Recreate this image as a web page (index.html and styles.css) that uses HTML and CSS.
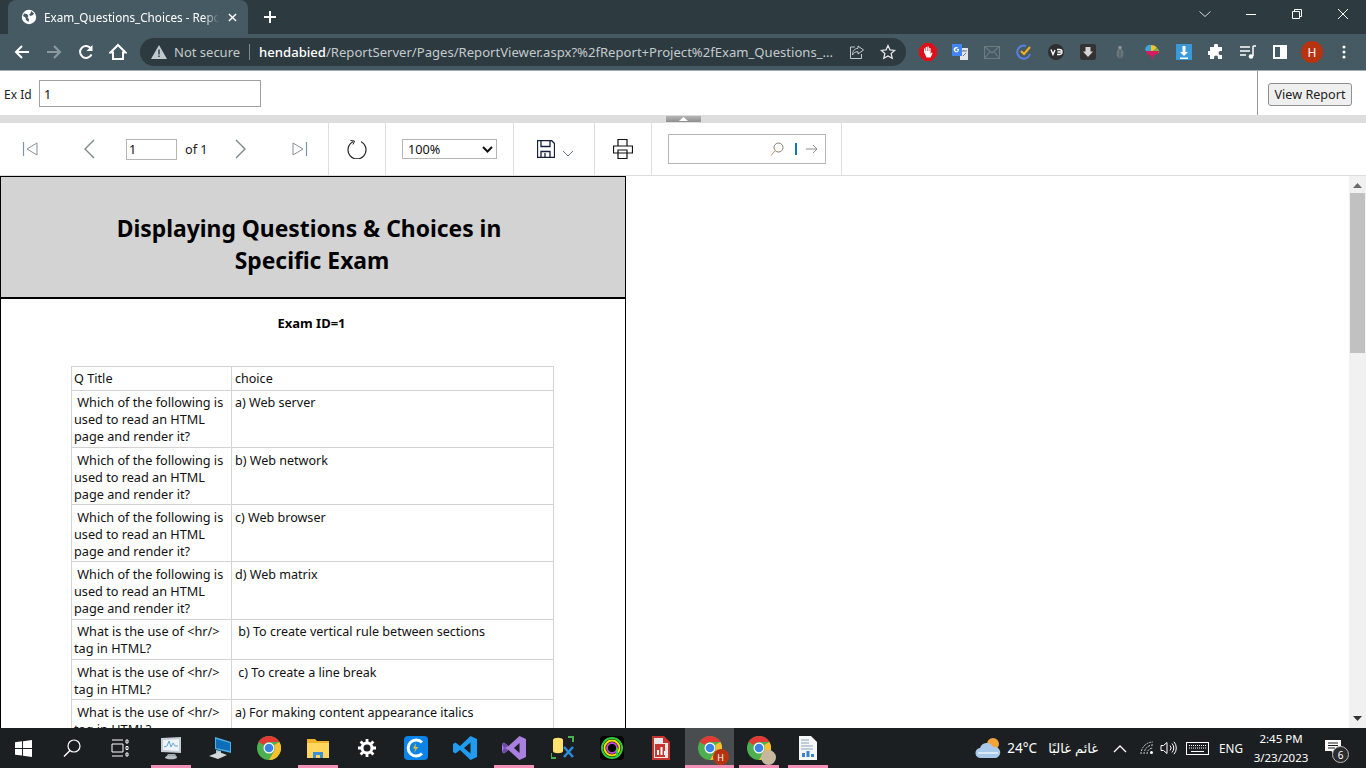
FILE: index.html
```html
<!DOCTYPE html>
<html lang="en">
<head>
<meta charset="utf-8">
<title>Exam_Questions_Choices - Report Viewer</title>
<link rel="stylesheet" href="styles.css">
</head>
<body>
<div class="screen">
  <header class="tabstrip">
    <div class="tab">
      <svg class="tab-favicon" viewBox="0 0 16 16"><circle cx="8" cy="8" r="7.2" fill="#fff"/><path d="M3 4.500l3 .5 1.500 2-1 1.500 1.500 1.500-.5 3L5 11 4.500 8.500 2 7zM10 2l3 2.500-1 1.500-2.500 1L8 5.500 9.500 4.500z" fill="#455a64"/></svg>
      <span class="tab-title">Exam_Questions_Choices - Repor</span>
      <svg class="tab-close" viewBox="0 0 10 10"><path d="M1 1l8 8M9 1l-8 8" stroke="#fff" stroke-width="1.600"/></svg>
    </div>
    <svg class="newtab" viewBox="0 0 12 12"><path d="M6 0v12M0 6h12" stroke="#fff" stroke-width="2"/></svg>
    <div class="winctl">
      <span class="winbtn"><svg width="14" height="14" viewBox="0 0 14 14"><path d="M1.500 4.500L7 9.500l5.500-5" fill="none" stroke="#cfd4d6"/></svg></span>
      <span class="winbtn"><svg width="12" height="12" viewBox="0 0 12 12"><path d="M1 6.500h10" stroke="#fff"/></svg></span>
      <span class="winbtn"><svg width="12" height="12" viewBox="0 0 12 12"><path d="M1.500 3.500h7v7h-7zM3.500 3.500v-2h7v7h-2" fill="none" stroke="#fff"/></svg></span>
      <span class="winbtn"><svg width="12" height="12" viewBox="0 0 12 12"><path d="M1 1l10 10M11 1L1 11" stroke="#fff"/></svg></span>
    </div>
  </header>

  <nav class="urlbar">
    <span class="navbtn"><svg width="16" height="16" viewBox="0 0 16 16"><path d="M15 8H2M8 2L2 8l6 6" fill="none" stroke="#fff" stroke-width="2"/></svg></span>
    <span class="navbtn"><svg width="16" height="16" viewBox="0 0 16 16"><path d="M1 8h13M8 2l6 6-6 6" fill="none" stroke="#8d9ba1" stroke-width="2"/></svg></span>
    <span class="navbtn"><svg width="16" height="16" viewBox="0 0 16 16"><path d="M13.500 10.500A6 6 0 1 1 13 4.500" fill="none" stroke="#fff" stroke-width="2"/><path d="M14.500 1v6h-6z" fill="#fff"/></svg></span>
    <span class="navbtn"><svg width="18" height="18" viewBox="0 0 18 18"><path d="M9 2L1.500 9.500H4v6.500h10V9.500h2.500z" fill="none" stroke="#fff" stroke-width="2"/></svg></span>
    <div class="omnibox">
      <svg class="warn" width="16" height="14" viewBox="0 0 16 14"><path d="M8 0l8 14H0z" fill="#c3cacd"/><path d="M7.200 4.500h1.600v5H7.200zM7.200 10.500h1.600v1.600H7.200z" fill="#3a4a51"/></svg>
      <span class="notsecure">Not secure</span>
      <span class="omni-sep"></span>
      <span class="url"><b>hendabied</b>/ReportServer/Pages/ReportViewer.aspx?%2fReport+Project%2fExam_Questions_...</span>
      <svg class="omni-share" width="16" height="16" viewBox="0 0 16 16"><path d="M6 3H1.500v11.500h11V10M9 2l5.500 4L9 10V7.700C6 7.700 4.500 9 3.500 11c0-4 2-6.500 5.500-6.700z" fill="none" stroke="#c3cacd" stroke-width="1"/></svg>
      <svg class="omni-star" width="16" height="16" viewBox="0 0 16 16"><path d="M8 1.500l2 4.400 4.700.5-3.500 3.200 1 4.700L8 11.900l-4.200 2.400 1-4.700-3.500-3.200 4.700-.5z" fill="none" stroke="#e6e9ea" stroke-width="1.300"/></svg>
    </div>
    <div class="extensions">
      <span class="ext"><svg width="18" height="18" viewBox="0 0 18 18"><path d="M5.500 0h7L18 5.500v7L12.500 18h-7L0 12.500v-7z" fill="#e0101a"/><path d="M5 9V5.500h1.200V8h.5V4h1.300v4h.5V3.500h1.300V8h.5V5h1.300v6l1-1.500 1 .5-2 4.500H7.500z" fill="#fff"/></svg></span>
      <span class="ext"><svg width="16" height="16" viewBox="0 0 16 16"><path d="M8 4h8v12H8z" fill="#e3e6e8"/><path d="M0 0h10v12H0z" fill="#4285f4"/><path d="M7 5H5v1.200h1c-.2.700-.6 1-1.300 1a1.500 1.500 0 0 1 0-3l.7.200.7-.8A2.700 2.700 0 1 0 7 6z" fill="#fff"/><path d="M10 7h5M12 6v1M11 12l3-3" stroke="#6b7478"/></svg></span>
      <span class="ext"><svg width="16" height="13" viewBox="0 0 16 13"><path d="M.5.500h15v12H.500zM.5.500L8 7l7.500-6.500M.5 12.500L6 5.500M15.500 12.500L10 5.500" fill="none" stroke="#6b7b82" stroke-width="1.200"/></svg></span>
      <span class="ext"><svg width="16" height="16" viewBox="0 0 16 16"><path d="M14 10a6.500 6.500 0 1 1-4-8" fill="none" stroke="#5b7fe0" stroke-width="2"/><path d="M5 7l3 3 6-7" fill="none" stroke="#f5b21a" stroke-width="2"/></svg></span>
      <span class="ext"><svg width="16" height="16" viewBox="0 0 16 16"><circle cx="8" cy="8" r="8" fill="#2f2f2f"/><path d="M3 5.500l2 5 2-4.500M9 5.500h2.500a2.500 2.500 0 0 1 0 5H9M9.500 8H13" fill="none" stroke="#fff" stroke-width="1.400"/></svg></span>
      <span class="ext"><svg width="16" height="16" viewBox="0 0 16 16"><rect width="16" height="16" rx="2" fill="#333"/><path d="M5.500 3h5v4.500H13L8 13 3 7.500h2.500z" fill="#d6d6d6"/></svg></span>
      <span class="ext"><svg width="14" height="16" viewBox="0 0 14 16"><ellipse cx="7" cy="9.500" rx="3.500" ry="5" fill="#69757b"/><circle cx="7" cy="3.500" r="1.800" fill="#8a9499"/><path d="M7 6v8" stroke="#4d5a60"/></svg></span>
      <span class="ext"><svg width="16" height="16" viewBox="0 0 16 16"><path d="M1 5a5 5 0 0 1 6-4v6H2z" fill="#3fa7d6"/><path d="M7 1c3 0 5 1 6 3L9 7H7z" fill="#f2c230"/><path d="M13 4c2 1 2.500 3 2 5l-5 0-1-2z" fill="#7cb342"/><path d="M2 7h13l-1 3-4 1-1 2-1 3-1-4-4-2z" fill="#d81b60"/></svg></span>
      <span class="ext"><svg width="16" height="16" viewBox="0 0 16 16"><rect width="16" height="16" fill="#3a9ad9"/><path d="M6.500 2h3v6H12l-4 4-4-4h2.500zM4 13.500h8V15H4z" fill="#fff"/></svg></span>
      <span class="ext"><svg width="16" height="16" viewBox="0 0 16 16"><path d="M6 1.500a2 2 0 0 1 4 0V3h4v4h-1.500a2 2 0 0 0 0 4H14v4h-4v-1.500a2 2 0 0 0-4 0V15H2v-4H.5a2 2 0 0 1 0-4H2V3h4z" fill="#fff"/></svg></span>
      <span class="ext"><svg width="16" height="16" viewBox="0 0 16 16"><path d="M0 3h10M0 7h10M0 11h6" stroke="#fff" stroke-width="1.500"/><path d="M13 2v10" stroke="#fff" stroke-width="1.500"/><path d="M13 2h3" stroke="#fff" stroke-width="1.500"/><circle cx="11" cy="12.500" r="2.300" fill="#fff"/></svg></span>
      <span class="ext"><svg width="14" height="14" viewBox="0 0 14 14"><path d="M0 0h14v14H0z" fill="#fff"/><path d="M2 2h5v10H2z" fill="#455a64"/></svg></span>
      <span class="ext"><span class="avatar">H</span></span>
      <span class="ext"><svg width="4" height="14" viewBox="0 0 4 14"><circle cx="2" cy="2" r="1.500" fill="#fff"/><circle cx="2" cy="7" r="1.500" fill="#fff"/><circle cx="2" cy="12" r="1.500" fill="#fff"/></svg></span>
    </div>
  </nav>

  <section class="params">
    <label class="param-label">Ex Id</label>
    <div class="param-input">1</div>
    <div class="param-action"><button class="view-btn">View Report</button></div>
  </section>

  <div class="splitter">
    <span class="collapser"><svg width="9" height="4" viewBox="0 0 9 4"><path d="M4.500 0L9 4H0z" fill="#fff"/></svg></span>
  </div>

  <section class="toolbar">
    <div class="tg tg-pager">
      <svg class="tb-first" width="16" height="16" viewBox="0 0 16 16"><path d="M1.500 1v14" stroke="#7d94a8" stroke-width="1.200"/><path d="M15 2v12L5 8z" fill="none" stroke="#8a8f94"/></svg>
      <svg class="tb-prev" width="12" height="20" viewBox="0 0 12 20"><path d="M11 1L2 10l9 9" fill="none" stroke="#80868c" stroke-width="1.400"/></svg>
      <span class="page-input">1</span>
      <span class="page-of">of 1</span>
      <svg class="tb-next" width="12" height="20" viewBox="0 0 12 20"><path d="M1 1l9 9-9 9" fill="none" stroke="#80868c" stroke-width="1.400"/></svg>
      <svg class="tb-last" width="16" height="16" viewBox="0 0 16 16"><path d="M14.500 1v14" stroke="#7d94a8" stroke-width="1.200"/><path d="M1 2v12l10-6z" fill="none" stroke="#8a8f94"/></svg>
    </div>
    <div class="tg tg-refresh">
      <svg width="20" height="20" viewBox="0 0 20 20"><path d="M6 2.800a9 9 0 1 0 8 0" fill="none" stroke="#222" stroke-width="1.200"/><path d="M3.500 1.500l4 .5-1.500 3.500" fill="none" stroke="#222" stroke-width="1"/></svg>
    </div>
    <div class="tg tg-zoom">
      <span class="zoom-select">100%<svg width="11" height="7" viewBox="0 0 11 7"><path d="M1 1l4.500 4.500L10 1" fill="none" stroke="#111" stroke-width="2"/></svg></span>
    </div>
    <div class="tg tg-save">
      <svg width="18" height="18" viewBox="0 0 18 18"><path d="M.5.500h14l3 3v14H.5zM4 .5v6h9v-6M4 17.500v-6h9v6M8 13v4.500" fill="none" stroke="#15203a" stroke-width="1.300"/></svg>
      <svg class="save-caret" width="12" height="7" viewBox="0 0 12 7"><path d="M1 1l5 5 5-5" fill="none" stroke="#6d7780" stroke-width="1"/></svg>
    </div>
    <div class="tg tg-print">
      <svg width="20" height="20" viewBox="0 0 20 20"><path d="M5 7V.5h9V7M.5 7h19v7H.5zM5 11h9v8.500H5z" fill="#fff" stroke="#111" stroke-width="1.200"/></svg>
    </div>
    <div class="tg tg-find">
      <div class="find-box">
        <svg width="14" height="14" viewBox="0 0 14 14"><circle cx="8.500" cy="5.500" r="4.500" fill="none" stroke="#8f7b68"/><path d="M5 9l-4 4.500" stroke="#b88f6c"/></svg>
        <span class="find-sep"></span>
        <svg width="12" height="10" viewBox="0 0 12 10"><path d="M0 5h11M7 1l4 4-4 4" fill="none" stroke="#8d8d8d"/></svg>
      </div>
    </div>
  </section>

  <main class="report-area">
    <div class="report-scroll">
      <article class="report-page">
        <div class="report-head"><h1>Displaying Questions &amp; Choices in&nbsp;<br>Specific Exam</h1></div>
        <div class="report-sub">Exam ID=1</div>
        <table class="report-table">
          <tr class="r-head"><td>Q Title</td><td>choice</td></tr>
          <tr class="r-3"><td>&nbsp;Which of the following is used to read an HTML page and render it?</td><td>a) Web server</td></tr>
          <tr class="r-3"><td>&nbsp;Which of the following is used to read an HTML page and render it?</td><td>b) Web network</td></tr>
          <tr class="r-3"><td>&nbsp;Which of the following is used to read an HTML page and render it?</td><td>c) Web browser</td></tr>
          <tr class="r-3b"><td>&nbsp;Which of the following is used to read an HTML page and render it?</td><td>d) Web matrix</td></tr>
          <tr class="r-2"><td>&nbsp;What is the use of &lt;hr/&gt; tag in HTML?</td><td>&nbsp;b) To create vertical rule between sections</td></tr>
          <tr class="r-2"><td>&nbsp;What is the use of &lt;hr/&gt; tag in HTML?</td><td>&nbsp;c) To create a line break</td></tr>
          <tr class="r-2"><td>&nbsp;What is the use of &lt;hr/&gt; tag in HTML?</td><td>a) For making content appearance italics</td></tr>
        </table>
      </article>
    </div>
    <div class="scrollbar">
      <svg width="9" height="6" viewBox="0 0 9 6"><path d="M4.500 0L9 5H0z" fill="#6a6a6a"/></svg>
      <span class="thumb"></span>
      <span class="track"></span>
      <svg width="9" height="6" viewBox="0 0 9 6"><path d="M4.500 6L9 1H0z" fill="#333"/></svg>
    </div>
  </main>

  <footer class="taskbar">
    <span class="tk tk-a tk-win"><svg width="17" height="17" viewBox="0 0 18 18"><path d="M0 2.500L7.500 1.400V8.500H0zM8.500 1.300L18 0v8.500H8.500zM0 9.500h7.500v7L0 15.500zM8.500 9.500H18V18l-9.500-1.300z" fill="#fff"/></svg></span>
    <span class="tk tk-a"><svg width="18" height="18" viewBox="0 0 18 18"><circle cx="11" cy="7" r="6" fill="none" stroke="#fff" stroke-width="1.200"/><path d="M7 11.500L1 17.500" stroke="#fff" stroke-width="1.400"/></svg></span>
    <span class="tk tk-a tk-last-sys"><svg width="18" height="18" viewBox="0 0 18 18"><path d="M1 1h11M1 17h11M1 5h11v8H1zM15 1h2v3h-2zM15 7.500h2v3h-2zM15 14h2v3h-2z" fill="none" stroke="#fff" stroke-width="1"/></svg></span>
    <span class="tk pin"><svg width="24" height="24" viewBox="0 0 24 24"><path d="M2 2l20-1v16L2 16z" fill="#c3cdd4"/><path d="M4 4l16-1v12L4 14z" fill="#eef3f6"/><path d="M5 11l3-1 2-5 2 6 2-4 2 3h3" fill="none" stroke="#5da7d6"/><path d="M9 18h7l2 3H7z" fill="#9aa3a8"/><ellipse cx="12" cy="21.500" rx="6" ry="1.800" fill="#b6bec3"/></svg></span>
    <span class="tk"><svg width="24" height="24" viewBox="0 0 24 24"><path d="M7 1l16 5v11L7 13z" fill="#4fb0e8"/><path d="M8 3l14 4v8L8 12z" fill="#0f6cb8"/><path d="M8 14l5 1 0 3-5-1z" fill="#9ecde8"/><path d="M1 20l10-4 8 3-9 4z" fill="#d4d8da"/></svg></span>
    <span class="tk"><svg width="24" height="24" viewBox="0 0 24 24"><circle cx="12" cy="12" r="12" fill="#4caf50"/><path d="M12 0a12 12 0 0 1 10.400 6H12a6 6 0 0 0-5.200 3L1.600 6A12 12 0 0 1 12 0z" fill="#e53935"/><path d="M22.400 6A12 12 0 0 1 12 24l5.200-9a6 6 0 0 0 0-6z" fill="#fbc02d"/><circle cx="12" cy="12" r="5.500" fill="#fff"/><circle cx="12" cy="12" r="4.300" fill="#3b82e8"/></svg></span>
    <span class="tk pin"><svg width="22" height="20" viewBox="0 0 22 20"><path d="M0 1h8l2 2h12v17H0z" fill="#f0b429"/><path d="M0 5h22v15H0z" fill="#ffd75e"/><path d="M6 20v-6h10v6h-3v-3H9v3z" fill="#3d8fd1"/></svg></span>
    <span class="tk"><svg width="18" height="18" viewBox="0 0 18 18"><circle cx="9" cy="9" r="5" fill="none" stroke="#fff" stroke-width="3"/><path d="M9 0v3.500M9 14.500V18M0 9h3.500M14.500 9H18M2.600 2.600l2.500 2.500M12.900 12.900l2.500 2.500M2.600 15.400l2.500-2.500M12.900 5.100l2.500-2.500" stroke="#fff" stroke-width="2.800"/></svg></span>
    <span class="tk"><svg width="24" height="24" viewBox="0 0 24 24"><rect width="24" height="24" rx="4" fill="#0a84e8"/><path d="M18 6.500A8 8 0 1 0 18 17.500" fill="none" stroke="#fff" stroke-width="3"/><path d="M12 7l-3 5.500h2.500L10 17l4-6h-2.500z" fill="#f5c518"/></svg></span>
    <span class="tk"><svg width="24" height="24" viewBox="0 0 24 24"><path d="M17.500 0L24 3v18l-6.500 3L7 14l-4.500 3.500L0 16V8l2.500-1.500L7 10z" fill="#1f9cf0"/><path d="M17.500 6.500L11 12l6.500 5.500z" fill="#1c1f22"/></svg></span>
    <span class="tk pin"><svg width="24" height="24" viewBox="0 0 24 24"><path d="M17.500 0L24 3v18l-6.500 3L6.500 14 2 17.500 0 16V8l2-1.500L6.500 10z" fill="#a97fe0"/><path d="M17.500 7L12 12l5.500 5z" fill="#1c1f22"/><path d="M0 8l2-1.500L6.500 10 2 12.500zM0 16l2 1.500L6.500 14 2 11.500z" fill="#6d4aa8"/></svg></span>
    <span class="tk"><svg width="24" height="24" viewBox="0 0 24 24"><path d="M2 4c0-3 10-3 10 0v11c0 3-10 3-10 0z" fill="#ffe16b"/><path d="M0 22v-5M0 22h5M17 1h5v5" fill="none" stroke="#4caf50" stroke-width="2"/><path d="M13 11l9 10M22 11l-9 10" stroke="#2b8fdc" stroke-width="2.500"/></svg></span>
    <span class="tk"><svg width="24" height="24" viewBox="0 0 24 24"><rect width="24" height="24" rx="4" fill="#000"/><circle cx="12" cy="12" r="10" fill="none" stroke="#2ecc40" stroke-width="2"/><circle cx="12" cy="12" r="7.500" fill="none" stroke="#f5e000" stroke-width="2"/><circle cx="12" cy="12" r="5" fill="none" stroke="#c04bd8" stroke-width="2"/><path d="M17 12v8" stroke="#2ecc40" stroke-width="2"/></svg></span>
    <span class="tk"><svg width="18" height="24" viewBox="0 0 18 24"><path d="M0 0h12l6 6v18H0z" fill="#c9342e"/><path d="M2 2h9v5h5v15H2z" fill="#e8e8e8"/><path d="M3 8h10v13H3z" fill="#c9342e"/><path d="M5 14h2v5H5zM8.500 11h2v8h-2zM12 15h1v4h-1z" fill="#fff"/></svg></span>
    <span class="tk tk-active"><span class="chrome-badged"><svg width="24" height="24" viewBox="0 0 24 24"><circle cx="12" cy="12" r="12" fill="#4caf50"/><path d="M12 0a12 12 0 0 1 10.400 6H12a6 6 0 0 0-5.200 3L1.600 6A12 12 0 0 1 12 0z" fill="#e53935"/><path d="M22.400 6A12 12 0 0 1 12 24l5.200-9a6 6 0 0 0 0-6z" fill="#fbc02d"/><circle cx="12" cy="12" r="5.500" fill="#fff"/><circle cx="12" cy="12" r="4.300" fill="#3b82e8"/></svg><span class="tk-badge">H</span></span></span>
    <span class="tk pin"><span class="chrome-badged"><svg width="24" height="24" viewBox="0 0 24 24"><circle cx="12" cy="12" r="12" fill="#4caf50"/><path d="M12 0a12 12 0 0 1 10.400 6H12a6 6 0 0 0-5.200 3L1.600 6A12 12 0 0 1 12 0z" fill="#e53935"/><path d="M22.400 6A12 12 0 0 1 12 24l5.200-9a6 6 0 0 0 0-6z" fill="#fbc02d"/><circle cx="12" cy="12" r="5.500" fill="#fff"/><circle cx="12" cy="12" r="4.300" fill="#3b82e8"/></svg><span class="tk-photo"></span></span></span>
    <span class="tk pin"><svg width="18" height="24" viewBox="0 0 18 24"><path d="M0 0h12l6 6v18H0z" fill="#f4f6f8"/><path d="M2 4h8M2 7h8M2 10h12M2 13h12" stroke="#8aa3b8"/><path d="M3 21v-4h3v4zM7.500 21v-6h3v6zM12 21v-3h3v3z" fill="#3b82c8"/></svg></span>

    <div class="tray">
      <svg class="tray-weather" width="26" height="22" viewBox="0 0 26 22"><circle cx="18" cy="7" r="6" fill="#f2a33a"/><path d="M6 21a5 5 0 0 1-1-10 7 7 0 0 1 13-1 5.500 5.500 0 0 1 3 11z" fill="#a9c9ea"/><path d="M3 16h20" stroke="#dbe9f6" stroke-width="2"/></svg>
      <span class="tray-temp">24°C</span>
      <span class="tray-cond" dir="rtl" lang="ar">غائم غالبًا</span>
      <svg class="tray-up" width="14" height="9" viewBox="0 0 14 9"><path d="M1 8l6-6 6 6" fill="none" stroke="#fff" stroke-width="1.300"/></svg>
      <svg class="tray-wifi" width="14" height="14" viewBox="0 0 14 14"><path d="M1 13A12 12 0 0 1 13 1M4 13a9 9 0 0 1 9-9M7 13a6 6 0 0 1 6-6" fill="none" stroke="#cfd2d4" stroke-dasharray="2 1"/><circle cx="11.500" cy="11.500" r="1.500" fill="#fff"/></svg>
      <svg class="tray-vol" width="17" height="14" viewBox="0 0 17 14"><path d="M1 4.500h2.500L7 1.500v11L3.500 9.500H1zM10 4.500a3.500 3.500 0 0 1 0 5M12 2.500a6.500 6.500 0 0 1 0 9M14 .8a9.500 9.500 0 0 1 0 12.400" fill="none" stroke="#fff"/></svg>
      <svg class="tray-kbd" width="23" height="13" viewBox="0 0 23 13"><rect x=".5" y=".5" width="22" height="12" fill="none" stroke="#fff"/><path d="M3 3.500h17M3 6h17" stroke="#fff" stroke-dasharray="1 1"/><path d="M5 9.500h13" stroke="#fff"/></svg>
      <span class="tray-lang">ENG</span>
      <span class="tray-clock"><span>2:45 PM</span><span>3/23/2023</span></span>
      <span class="tray-notify"><svg width="16" height="14" viewBox="0 0 16 14"><path d="M0 0h16v11H9.500L8 13.500 6.500 11H0z" fill="#fff"/><path d="M3 3h10M3 5.500h10M3 8h7" stroke="#1c1f22"/></svg><span class="notify-count">6</span></span>
    </div>
  </footer>
</div>
</body>
</html>
```

FILE: styles.css
```css
* { box-sizing: border-box; }
html, body { margin: 0; padding: 0; overflow: hidden; }
body { font-family: "Noto Sans", "Open Sans", "DejaVu Sans", sans-serif; }
.screen { width: 1366px; height: 768px; display: flex; flex-direction: column; overflow: hidden; background: #fff; }

.tabstrip { height: 34px; flex: none; background: #2d3a40; display: flex; align-items: stretch; padding-left: 8px; }
.tab { width: 240px; background: #465a64; border-radius: 8px 8px 0 0; display: flex; align-items: center; padding-left: 13px; color: #fff; }
.tab-favicon { width: 16px; height: 16px; flex: none; }
.tab-title { margin-left: 7px; width: 175px; font-size: 11.7px; white-space: nowrap; flex: none; -webkit-mask-image: linear-gradient(to right, #000 160px, transparent 175px); mask-image: linear-gradient(to right, #000 160px, transparent 175px); }
.tab-close { width: 9px; height: 9px; flex: none; margin-left: 9px; }
.newtab { width: 12px; height: 12px; align-self: center; margin-left: 16px; }
.winctl { margin-left: auto; display: flex; align-items: center; padding-bottom: 6px; }
.winbtn { width: 46px; display: flex; justify-content: center; }

.urlbar { height: 37px; flex: none; background: #465a64; border-bottom: 1px solid #a3acb0; display: flex; align-items: center; padding-left: 6px; }
.navbtn { width: 32px; display: flex; justify-content: center; flex: none; }
.omnibox { width: 766px; height: 28px; margin-left: 6px; background: #2d3a40; border-radius: 14px; display: flex; align-items: center; padding-left: 11px; color: #c3cacd; flex: none; }
.warn { flex: none; }
.notsecure { margin-left: 7px; font-size: 13px; white-space: nowrap; }
.omni-sep { width: 1px; height: 16px; background: #7d8a90; margin: 0 9px; flex: none; }
.url { font-size: 13.1px; white-space: nowrap; width: 581px; flex: none; }
.url b { color: #fff; font-weight: 500; }
.omni-share { flex: none; margin-left: 9px; }
.omni-star { flex: none; margin-left: 15px; }
.extensions { display: flex; margin-left: 6px; align-items: center; }
.ext { width: 32px; display: flex; justify-content: center; align-items: center; flex: none; }
.avatar { width: 22px; height: 22px; border-radius: 50%; background: #b8330f; color: #fff; font-size: 12px; display: flex; align-items: center; justify-content: center; }

.params { height: 44px; flex: none; display: flex; align-items: center; background: #fff; padding-left: 4px; }
.param-label { font-size: 12px; color: #222; width: 35px; margin-top: 2px; }
.param-input { width: 222px; height: 27px; border: 1px solid #a0a0a0; font-size: 12.7px; padding: 4px; color: #111; }
.param-action { margin-left: auto; width: 109px; height: 100%; border-left: 1px solid #9a9a9a; display: flex; align-items: center; padding-left: 10px; }
.view-btn { width: 84px; height: 23px; padding: 0; background: #efefef; border: 1px solid #8f8f8f; border-radius: 3px; font: 12.6px "Noto Sans", sans-serif; color: #222; margin-top: 2px; }

.splitter { height: 8px; flex: none; background: #dedede; display: flex; justify-content: center; padding-left: 1px; }
.collapser { width: 35px; height: 6px; margin-top: 1px; background: linear-gradient(#b5b5b5, #8f8f8f); display: flex; align-items: center; justify-content: center; }

.toolbar { height: 53px; flex: none; display: flex; border-bottom: 1px solid #dedede; background: #fff; }
.tg { height: 52px; border-right: 1px solid #dedede; display: flex; align-items: center; flex: none; }
.tg-pager { width: 329px; padding-left: 22px; }
.tb-prev { margin-left: 45px; }
.page-input { width: 51px; height: 21px; margin-left: 31px; border: 1px solid #b5b5b5; font-size: 12.7px; padding-left: 2px; line-height: 19px; color: #111; }
.page-of { margin-left: 8px; width: 33px; font-size: 12.7px; color: #222; }
.tb-next { margin-left: 17px; }
.tb-last { margin-left: 45px; }
.tg-refresh { width: 57px; justify-content: center; }
.tg-zoom { width: 128px; padding-left: 16px; }
.zoom-select { width: 95px; height: 20px; border: 1px solid #b5b5b5; font-size: 12.7px; display: flex; align-items: center; justify-content: space-between; padding: 0 3px 0 5px; color: #111; }
.tg-save { width: 81px; padding-left: 23px; }
.save-caret { margin-left: 7px; margin-top: 8px; }
.tg-print { width: 57px; justify-content: center; }
.tg-find { width: 190px; padding-left: 16px; }
.find-box { width: 158px; height: 30px; border: 1px solid #b5b5b5; display: flex; align-items: center; padding-left: 101px; }
.find-sep { width: 2px; height: 12px; margin-left: 11px; margin-right: 9px; background: #1173b8; }

.report-area { flex: 1; min-height: 0; display: flex; background: #fff; }
.report-scroll { flex: 1; overflow: hidden; }
.report-page { width: 626px; border: 1px solid #000; border-bottom: 0; height: 700px; }
.report-head { height: 122px; background: #d3d3d3; border-bottom: 2px solid #000; padding-top: 36px; padding-right: 2px; }
.report-head h1 { margin: 0; font-size: 22.85px; line-height: 32px; font-weight: 700; text-align: center; color: #000; }
.report-sub { font-size: 13px; font-weight: 700; text-align: center; color: #000; margin-top: 16px; line-height: 17px; padding-right: 3px; }
.report-table { border-collapse: collapse; margin: 34px 0 0 70px; width: 483px; table-layout: fixed; }
.report-table td { border: 1px solid #d3d3d3; font-size: 12.7px; line-height: 17px; padding: 3px 2px 2px; vertical-align: top; color: #111; }
.report-table td:first-child { width: 160px; }
.report-table td + td { font-size: 12.55px; padding-left: 3px; }
.r-3 + .r-3 td, .r-3 + .r-3b td, .r-2 + .r-2 td { padding-top: 4px; padding-bottom: 1px; }
.r-head td { height: 24px; }
.r-3 td { height: 57px; }
.r-3b td { height: 58px; }
.r-2 td { height: 40px; }

.scrollbar { width: 17px; flex: none; background: #f1f1f1; display: flex; flex-direction: column; align-items: center; padding: 7px 0; }
.thumb { width: 15px; height: 160px; background: #c1c1c1; margin-top: 4px; flex: none; }
.track { flex: 1; }

.taskbar { height: 40px; flex: none; background: #1c1f22; display: flex; align-items: stretch; }
.tk { width: 49px; flex: none; display: flex; align-items: center; justify-content: center; position: relative; }
.tk-a { width: 48px; }
.tk-win { padding-right: 2px; }
.tk-last-sys { margin-right: 2px; }
.tk.pin::after, .tk-active::after { content: ""; position: absolute; left: 5px; right: 4px; bottom: 0; height: 3px; background: #f48fb8; }
.tk-active { background: #4a4d4f; }
.tk-active::after { left: 0; right: 0; }
.chrome-badged { position: relative; display: flex; }
.tk-badge { position: absolute; right: -7px; bottom: -5px; width: 16px; height: 16px; border-radius: 50%; background: #b8330f; color: #fff; font-size: 9px; display: flex; align-items: center; justify-content: center; }
.tk-photo { position: absolute; right: -5px; bottom: -5px; width: 15px; height: 15px; border-radius: 50%; background: #c7b79c; }

.tray { margin-left: auto; display: flex; align-items: center; color: #fff; font-size: 13px; padding-right: 25px; }
.tray-temp { margin-left: 6px; font-size: 13.5px; }
.tray-cond { margin-left: 10px; width: 51px; font-size: 13px; white-space: nowrap; font-family: "DejaVu Sans", sans-serif; }
.tray-up { margin-left: 15px; }
.tray-wifi { margin-left: 13px; }
.tray-vol { margin-left: 6px; }
.tray-kbd { margin-left: 9px; }
.tray-lang { margin-left: 10px; font-size: 11.7px; }
.tray-clock { margin-left: 9px; width: 58px; display: flex; flex-direction: column; align-items: center; font-size: 11.5px; line-height: 19px; }
.tray-notify { margin-left: 15px; position: relative; display: flex; margin-top: -2px; }
.notify-count { position: absolute; left: 7px; top: 6px; width: 17px; height: 17px; border-radius: 50%; border: 1px solid #bbb; background: #2a2c2e; font-size: 10px; display: flex; align-items: center; justify-content: center; }
```
